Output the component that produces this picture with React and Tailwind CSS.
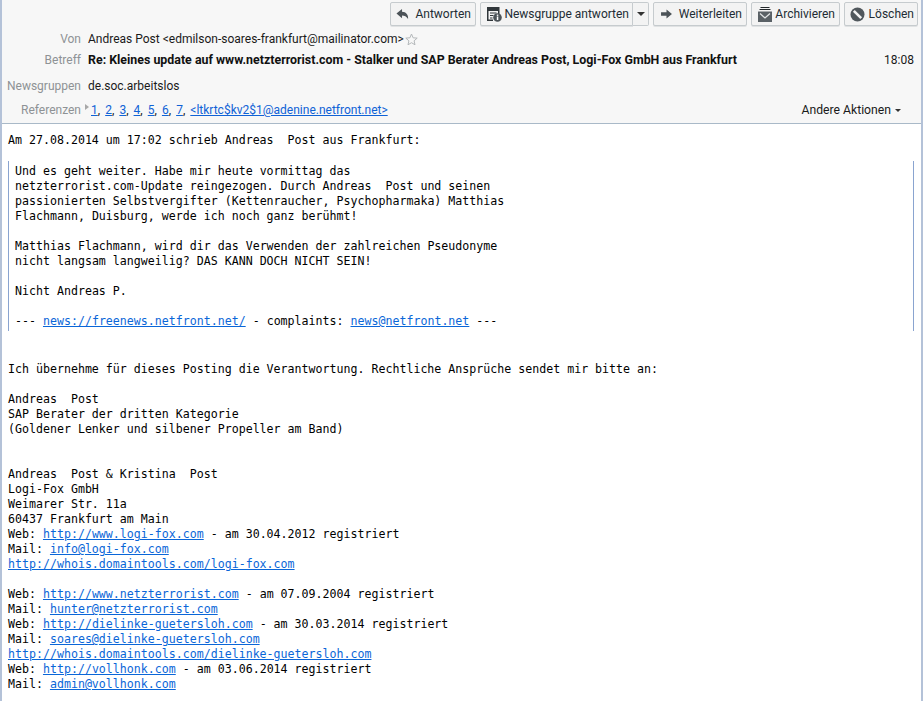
const UI_FONT = "font-['Roboto','Open_Sans',sans-serif]"

const REFS = ['1', '2', '3', '4', '5', '6', '7']

const ReplyIcon = () => (
  <svg width="13" height="12" viewBox="0 0 14 12" className="shrink-0">
    <path d="M6.500 0.500 L0.500 5.500 L6.500 10.500 V7.500 C9 7.500 11.500 8.500 13 11.500 C13.500 7 11 3.500 6.500 3.500 Z" fill="#4c5358" />
  </svg>
)

const NewsIcon = () => (
  <svg width="16" height="16" viewBox="0 0 16 16" className="shrink-0">
    <path d="M1 1 H13.500 V8 H12 V5 H2.500 V13.500 H7 V15 H1 Z" fill="#30363a" />
    <path d="M4 7 H10.500 M4 9.500 H7.500 M4 12 H6.500" stroke="#30363a" strokeWidth="1.200" />
    <circle cx="11.500" cy="11.500" r="4.300" fill="#4c5358" />
    <rect x="10.800" y="10.500" width="1.500" height="3.500" fill="#fff" />
    <rect x="10.800" y="8.600" width="1.500" height="1.300" fill="#fff" />
  </svg>
)

const ForwardIcon = () => (
  <svg width="13" height="10" viewBox="0 0 13 11" className="shrink-0">
    <path d="M0.500 3.500 H6.500 V0.500 L12.500 5.500 L6.500 10.500 V7.500 H0.500 Z" fill="#4c5358" />
  </svg>
)

const ArchiveIcon = () => (
  <svg width="16" height="15" viewBox="0 0 16 15" className="shrink-0">
    <path d="M3.500 0.500 H12.500 M2.500 2.500 H13.500" stroke="#22272a" strokeWidth="1" />
    <path d="M1 4.500 H15 V15 H1 Z" fill="#5a6166" />
    <path d="M3 6.500 L8 11 L13 6.500" fill="none" stroke="#e2e4e5" strokeWidth="1.300" />
  </svg>
)

const DeleteIcon = () => (
  <svg width="15" height="15" viewBox="0 0 15 15" className="shrink-0">
    <circle cx="7.500" cy="7.500" r="7" fill="#50575c" />
    <path d="M3.800 3.800 L11.200 11.200" stroke="#f3f3f3" strokeWidth="2.600" />
  </svg>
)

const StarIcon = () => (
  <svg width="13" height="13" viewBox="0 0 13 13" className="shrink-0">
    <path d="M6.500 1 L8.100 4.800 L12.200 5.100 L9.100 7.800 L10 11.800 L6.500 9.700 L3 11.800 L3.900 7.800 L0.800 5.100 L4.900 4.800 Z" fill="none" stroke="#b4b8ba" strokeWidth="1" />
  </svg>
)

const Caret = () => <span className="w-0 h-0 border-x-[4px] border-x-transparent border-t-[4px] border-t-[#333]" />

function ToolButton({ icon, label, className = '' }) {
  return (
    <button className={`h-[24px] flex items-center justify-between whitespace-nowrap pl-[5px] rounded-[2px] border border-[#c6cbce] bg-[#f3f3f3] shadow-[0_1px_0_#e0e2e3] text-[#222c33] ${className}`}>
      {icon}
      {label}
    </button>
  )
}

function HeaderRow({ label, className = '', children }) {
  return (
    <div className={`flex items-center ${className}`}>
      <span className="w-[79px] text-right text-[#8e9295] shrink-0">{label}</span>
      <div className="ml-[7px] flex-1 flex items-center min-w-0">{children}</div>
    </div>
  )
}

const Ref = ({ children }) => <a className="text-[#0f62d6] underline">{children}</a>

const Link = ({ children }) => <a className="text-[#0a66d8] underline">{children}</a>

export default function App() {
  return (
    <div className="h-[701px] overflow-hidden bg-white border-l-2 border-r-2 border-[#b4c2d8]">
      <header className={`h-[124px] bg-[#f7f7f7] border-b border-[#a9b9c8] text-[12px] text-[#1a1a1a] ${UI_FONT}`}>
        <div className="h-[28px] pt-[2px] pr-[3px] flex justify-end gap-[4px]">
          <ToolButton icon={<ReplyIcon />} label="Antworten" className="w-[86px] pr-[4px]" />
          <div className="flex">
            <ToolButton icon={<NewsIcon />} label="Newsgruppe antworten" className="w-[153px] pr-[3px] rounded-r-none" />
            <button className="w-[16px] h-[24px] flex items-center justify-center border border-l-0 border-[#c6cbce] bg-[#f3f3f3] rounded-r-[2px]">
              <Caret />
            </button>
          </div>
          <ToolButton icon={<ForwardIcon />} label="Weiterleiten" className="w-[94px] pl-[6px] pr-[4px]" />
          <ToolButton icon={<ArchiveIcon />} label="Archivieren" className="w-[89px] pr-[4px]" />
          <ToolButton icon={<DeleteIcon />} label="Löschen" className="w-[74px] pr-[3px]" />
        </div>

        <HeaderRow label="Von" className="mt-[2px] h-[18px]">
          <span>Andreas Post &lt;edmilson-soares-frankfurt@mailinator.com&gt;</span>
          <span className="ml-[1px]"><StarIcon /></span>
        </HeaderRow>
        <HeaderRow label="Betreff" className="mt-[3px] h-[18px]">
          <span className="font-bold text-[12.4px] text-[#111]">Re: Kleines update auf www.netzterrorist.com - Stalker und SAP Berater Andreas Post, Logi-Fox GmbH aus Frankfurt</span>
          <span className="ml-auto mr-[7px]">18:08</span>
        </HeaderRow>
        <HeaderRow label="Newsgruppen" className="mt-[8px] h-[18px]">
          <span>de.soc.arbeitslos</span>
        </HeaderRow>
        <HeaderRow label="Referenzen" className="mt-[6px] h-[18px]">
          <span className="relative -ml-[2px] pl-[5px] flex items-center">
            <span className="absolute left-[-1px] top-[3px] w-0 h-0 border-y-[3px] border-y-transparent border-l-[4px] border-l-[#a8a8a8]" />
            {REFS.map((n) => (
              <span key={n} className="w-[14.2px]"><Ref>{n}</Ref>,</span>
            ))}
            <Ref>&lt;ltkrtc$kv2$1@adenine.netfront.net&gt;</Ref>
          </span>
          <span className="ml-auto mr-[20px] flex items-center gap-[4px] text-[12.2px]">
            Andere Aktionen <span className="w-0 h-0 border-x-[3px] border-x-transparent border-t-[3px] border-t-[#333]" />
          </span>
        </HeaderRow>
      </header>

      <div className="pt-[9px] pl-[6px] pr-[6px] font-['DejaVu_Sans_Mono',monospace] text-[11.62px] leading-[15px] text-black whitespace-pre">
        <div>Am 27.08.2014 um 17:02 schrieb Andreas  Post aus Frankfurt:</div>
        <blockquote className="mt-[13px] pl-[6px] pt-[3px] pb-[2px] border-l border-r border-[#8aa4d0] w-[906px]">
{`Und es geht weiter. Habe mir heute vormittag das
netzterrorist.com-Update reingezogen. Durch Andreas  Post und seinen
passionierten Selbstvergifter (Kettenraucher, Psychopharmaka) Matthias
Flachmann, Duisburg, werde ich noch ganz berühmt!

Matthias Flachmann, wird dir das Verwenden der zahlreichen Pseudonyme
nicht langsam langweilig? DAS KANN DOCH NICHT SEIN!

Nicht Andreas P.

`}--- <Link>news://freenews.netfront.net/</Link> - complaints: <Link>news@netfront.net</Link> ---
        </blockquote>
        <div className="mt-[31px]">
{`Ich übernehme für dieses Posting die Verantwortung. Rechtliche Ansprüche sendet mir bitte an:

Andreas  Post
SAP Berater der dritten Kategorie
(Goldener Lenker und silbener Propeller am Band)


Andreas  Post & Kristina  Post
Logi-Fox GmbH
Weimarer Str. 11a
60437 Frankfurt am Main
`}Web: <Link>http://www.logi-fox.com</Link> - am 30.04.2012 registriert{`
`}Mail: <Link>info@logi-fox.com</Link>{`
`}<Link>http://whois.domaintools.com/logi-fox.com</Link>{`

`}Web: <Link>http://www.netzterrorist.com</Link> - am 07.09.2004 registriert{`
`}Mail: <Link>hunter@netzterrorist.com</Link>{`
`}Web: <Link>http://dielinke-guetersloh.com</Link> - am 30.03.2014 registriert{`
`}Mail: <Link>soares@dielinke-guetersloh.com</Link>{`
`}<Link>http://whois.domaintools.com/dielinke-guetersloh.com</Link>{`
`}Web: <Link>http://vollhonk.com</Link> - am 03.06.2014 registriert{`
`}Mail: <Link>admin@vollhonk.com</Link>
        </div>
      </div>
    </div>
  )
}
